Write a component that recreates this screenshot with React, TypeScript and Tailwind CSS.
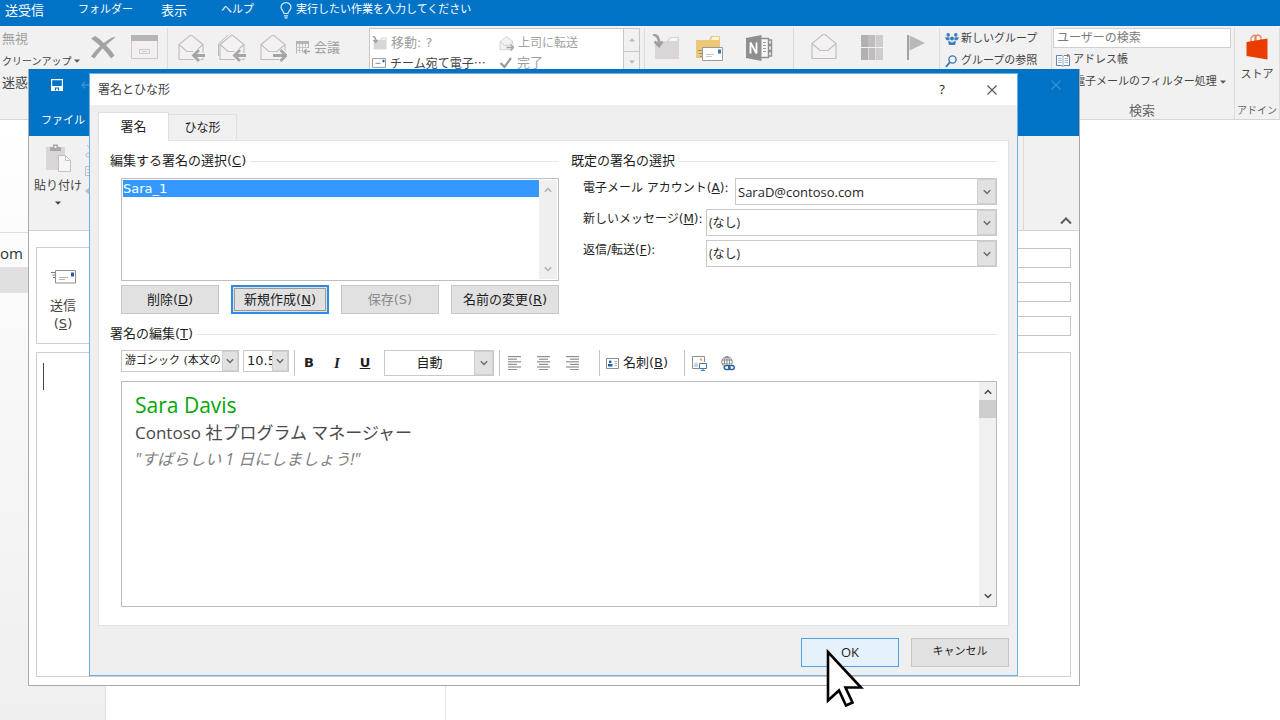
import React, { useState } from 'react'

const UI_FONT = "font-['DejaVu_Sans','Noto_Sans_CJK_JP',sans-serif]"
const TEXT_FONT = "font-['Open_Sans','Noto_Sans_CJK_JP',sans-serif]"

/* ---------- Small parts ---------- */

// Label with an underlined access key: 削除(D)
const KeyLabel: React.FC<{ text: string; k: string; tail?: string }> = ({ text, k, tail }) => (
  <>
    {text}(<span className="underline underline-offset-1">{k}</span>){tail}
  </>
)

const Chevron: React.FC<{ up?: boolean; className?: string }> = ({ up, className = 'text-[#6a6a6a]' }) => (
  <svg width="8" height="6" viewBox="0 0 8 6" className={className} fill="none" stroke="currentColor" strokeWidth="1.4">
    <path d={up ? 'M0.8 4.8 4 1.4 7.2 4.8' : 'M0.8 1.2 4 4.6 7.2 1.2'} />
  </svg>
)

const Caret: React.FC<{ className?: string }> = ({ className = 'text-[#5c5c5c]' }) => (
  <svg width="6" height="4" viewBox="0 0 6 4" className={`shrink-0 ${className}`}>
    <path d="M0 0.5H6L3 3.8z" fill="currentColor" />
  </svg>
)

const GroupTitle: React.FC<{ children: React.ReactNode }> = ({ children }) => (
  <div className="flex h-5 items-center gap-1 text-[13px] leading-5">
    <h2>{children}</h2>
    <span className="h-px flex-1 bg-[#e6e6e6]" />
  </div>
)

interface DropDownProps {
  id?: string
  label?: string
  options: string[]
  className: string
  selectClass?: string
  arrowClass?: string
}

const DropDown: React.FC<DropDownProps> = ({
  id,
  label,
  options,
  className,
  selectClass = 'pl-[2px] text-[13px]',
  arrowClass = 'w-[19px]',
}) => (
  <div className={`flex border border-[#c9c9cd] bg-white ${className}`}>
    <select id={id} aria-label={label} className={`min-w-0 flex-1 appearance-none bg-white outline-none ${selectClass}`}>
      {options.map((o) => (
        <option key={o}>{o}</option>
      ))}
    </select>
    <span
      className={`pointer-events-none flex shrink-0 items-center justify-center border border-[#cfcfcf] bg-[#e1e1e1] ${arrowClass}`}
    >
      <Chevron />
    </span>
  </div>
)

/* ---------- Icons ---------- */

const OpenEnvelope: React.FC<{ arrow?: 'left' | 'right'; double?: boolean; size?: number }> = ({
  arrow,
  double,
  size = 28,
}) => (
  <svg width={size} height={size} viewBox="0 0 28 28" fill="none" className="shrink-0">
    {double && <path d="M0.500 22V10L10 1" stroke="#bdb8bc" />}
    <path d="M2 25.500V10.500L13 1.500H15L26 10.500V25.500z" fill="#f4f0f4" stroke="#c3bdc2" strokeWidth="1.200" />
    <path d="M2 10.500 10 17.500H18L26 10.500" stroke="#c3bdc2" strokeWidth="1.200" />
    {arrow === 'left' && (
      <>
        <path d="M28 21.500H16.500M22 15.500 16 21.500 22 27" stroke="#f1f1f1" strokeWidth="5" />
        <path d="M28 21.500H16.500M22 16 16.500 21.500 22 27" stroke="#a5a5a5" strokeWidth="2.800" />
      </>
    )}
    {arrow === 'right' && (
      <>
        <path d="M14 21.500H27M21.500 15.500 27.500 21.500 21.500 27" stroke="#f1f1f1" strokeWidth="5" />
        <path d="M14 21.500H27M21.500 16 27 21.500 21.500 27" stroke="#a5a5a5" strokeWidth="2.800" />
      </>
    )}
  </svg>
)

const DeleteIcon = () => (
  <svg width="25" height="23" viewBox="0 0 25 23" fill="#a3a3a3">
    <path d="M0 2.500 4 0C9 3 18 11 23.500 19.500L20 22.500C15 15 8 8 0 2.500z" />
    <path d="M21 1.500 25 1C17 7 9 14 3.500 22.500L0 20.500C6 12 13 6 21 1.500z" />
  </svg>
)

const ArchiveIcon = () => (
  <svg width="27" height="24" viewBox="0 0 27 24" fill="none">
    <path d="M0.500 5V23.500H26.500V5" fill="#f3eff3" stroke="#cdc8cc" />
    <path d="M0 0H27V6H0z" fill="#b5b5b5" />
    <path d="M8.500 14.500H18.500V18.500H8.500z" stroke="#cdc8cc" />
    <path d="M11 16.500H16" stroke="#cdc8cc" />
  </svg>
)

const MeetingIcon = () => (
  <svg width="14" height="14" viewBox="0 0 14 14" fill="none">
    <path d="M0.500 12.500V0.500H12.500V7" stroke="#b3b3b3" />
    <path d="M0 0H13V3H0z" fill="#b3b3b3" />
    <path d="M3.500 3V12M6.500 3V12M9.500 3V7M0 6.500H12M0 9.500H7" stroke="#c9c4c8" />
    <path d="M14 10.500H8M10.500 8 8 10.500 10.500 13" stroke="#a5a5a5" strokeWidth="1.400" />
  </svg>
)

const MoveFolderIcon: React.FC<{ size?: number }> = ({ size = 28 }) => (
  <svg width={size} height={size} viewBox="0 0 28 28" fill="none">
    <path d="M3 7H15L18 3H27V25H3z" fill="#d9d5d9" />
    <path d="M16 7 18.500 3.500H26V7" fill="#f7f5f7" stroke="#d5d0d4" />
    <path d="M1 0.500C5 1 7.500 4 7 11M2.500 7.500 7 12 10.500 7.500" stroke="#a0a0a0" strokeWidth="2.600" />
  </svg>
)

const RulesIcon = () => (
  <svg width="28" height="28" viewBox="0 0 28 28" fill="none">
    <path d="M1 6H14L16 2H25V24H1z" fill="#efc673" />
    <path d="M15.500 6 17 2.500H24.500V6" fill="#fff7e6" stroke="#efc673" />
    <path d="M7.500 13.500H27.500V26.500H7.500z" fill="#fff" stroke="#9a9a9a" />
    <path d="M11 20.500H19M11 22.500H17" stroke="#c8c8c8" />
    <path d="M23 15.500H26V19.500H23z" fill="#2f75b8" />
    <path d="M3 16.500H7M4 19.500H7M5 22.500H7" stroke="#8f8f8f" />
  </svg>
)

const OneNoteIcon = () => (
  <svg width="27" height="26" viewBox="0 0 27 26" fill="none">
    <path d="M15 3.500H22.500V22.500H15" fill="#f6f6f6" stroke="#8f8f8f" strokeWidth="1.400" />
    <path d="M22.500 5H25.500V9.500H22.500M22.500 10.500H25.500V15.500H22.500M22.500 16.500H25.500V21H22.500" stroke="#8f8f8f" strokeWidth="1.400" />
    <path d="M17 7.500H20M17 10.500H20M17 13.500H20M17 16.500H20" stroke="#9c9c9c" />
    <path d="M0 3 15.500 0V26L0 23z" fill="#8f8f8f" />
    <path d="M4.500 18.500V7.500L10.500 18.500V7.500" stroke="#fff" strokeWidth="1.800" />
  </svg>
)

const CategoryIcon = () => (
  <svg width="22" height="25" viewBox="0 0 22 25">
    <path d="M0 0H7V12H0zM0 13H7V25H0z" fill="#b1b1b1" />
    <path d="M7 0H14V12H7zM7.500 13H14V25H7.500z" fill="#c0bcc0" />
    <path d="M14.500 0H22V12H14.500zM14.500 13H22V25H14.500z" fill="#cfcbcf" />
  </svg>
)

const FlagIcon = () => (
  <svg width="18" height="25" viewBox="0 0 18 25">
    <path d="M0 0H2V25H0z" fill="#a3a3a3" />
    <path d="M2.500 0.500 18 8 2.500 15.500z" fill="#b8b8b8" />
  </svg>
)

const PeopleIcon = () => (
  <svg width="14" height="13" viewBox="0 0 14 13" fill="#3f7cba">
    <circle cx="3.200" cy="1.900" r="1.800" />
    <circle cx="10.800" cy="1.900" r="1.800" />
    <circle cx="7" cy="5.600" r="2" />
    <path d="M0 4.200H4.500V7.200H1.500zM9.500 4.200H14L12.500 7.200H9.500zM3 8.200H5L7 9.800 9 8.200H11L10 12H4z" />
  </svg>
)

const SearchIcon = () => (
  <svg width="12" height="13" viewBox="0 0 12 13" fill="none" stroke="#3f78b5">
    <circle cx="7.500" cy="4.500" r="3.600" strokeWidth="1.400" />
    <path d="M4.800 7.400 0.900 12" strokeWidth="1.900" />
  </svg>
)

const BookIcon = () => (
  <svg width="14" height="13" viewBox="0 0 14 13" fill="none">
    <path d="M0.500 1.500H6L7 2.500 8 1.500H13.500V11.500H8L7 12.500 6 11.500H0.500z" fill="#fff" stroke="#5b86b5" />
    <path d="M7 2.500V12M2 4.500H5.500M2 6.500H5.500M2 8.500H5.500M8.500 4.500H12M8.500 6.500H12M8.500 8.500H12" stroke="#9db3cc" />
    <path d="M11 0H12.500V3H11z" fill="#e0603a" />
  </svg>
)

const StoreIcon = () => (
  <svg width="22" height="26" viewBox="0 0 22 26" fill="none">
    <path d="M5 9V4Q7 0.500 10 1.500V7M9 8V3Q12 -1 15 3V7" stroke="#e8835f" strokeWidth="1.300" />
    <path d="M0.500 8 21.500 4.500V25.500L0.500 22z" fill="#eb3c00" />
  </svg>
)

const MailIcon: React.FC<{ width?: number }> = ({ width = 14 }) => (
  <svg width={width} height={Math.round(width * 0.7)} viewBox="0 0 20 14" fill="none">
    <path d="M0.700 0.700H19.300V13.300H0.700z" fill="#fff" stroke="#8a8a8a" strokeWidth="1.200" />
    <path d="M5 7.500H12" stroke="#8a8a8a" strokeWidth="1.400" />
    <path d="M15 2.500H17.800V6H15z" fill="#1f5ea8" />
  </svg>
)

const SendIcon = () => (
  <svg width="25" height="15" viewBox="0 0 25 15" fill="none">
    <path d="M4.500 1.500H24.500V14H4.500z" fill="#fff" stroke="#909090" />
    <path d="M8 8.500H17M8 10.500H14" stroke="#b5b5b5" />
    <path d="M20 3.500H23V7.500H20z" fill="#1f5ea8" />
    <path d="M0 3.500H4M1.500 6H4M2 8.500H4" stroke="#7a7a7a" />
  </svg>
)

const PasteIcon = () => (
  <svg width="26" height="28" viewBox="0 0 26 28" fill="none">
    <path d="M1 3H20V26H1z" fill="#d9d5d9" />
    <path d="M5 3H8V0.500H13V3H16V7H5z" fill="#a8a8a8" />
    <path d="M9.500 2H11.500V4H9.500z" fill="#f1f1f1" />
    <path d="M13.500 11.500H20.500L25.500 16.500V27.500H13.500z" fill="#f8f5f8" stroke="#c4bfc3" />
    <path d="M20.500 11.500V16.500H25.500" stroke="#c4bfc3" />
  </svg>
)

const AlignIcon: React.FC<{ kind: 'left' | 'center' | 'right' }> = ({ kind }) => {
  const rows = [13, 9, 13, 9, 13, 9]
  return (
    <svg width="13" height="14" viewBox="0 0 13 14" fill="#8f8f8f">
      {rows.map((w, i) => {
        const x = kind === 'left' ? 0 : kind === 'center' ? (13 - w) / 2 : 13 - w
        return <rect key={i} x={x} y={i * 2.6} width={w} height="1.2" />
      })}
    </svg>
  )
}

const CardIcon = () => (
  <svg width="13" height="11" viewBox="0 0 13 11" fill="none">
    <path d="M0.500 0.500H12.500V10.500H0.500z" fill="#fff" stroke="#8c8c8c" />
    <circle cx="4.200" cy="3.900" r="1.400" fill="#1f5ea8" />
    <path d="M2 8.500V6H6.500V8.500z" fill="#1f5ea8" />
    <path d="M8.500 3.500H11M8.500 5.500H11M8.500 7.500H11" stroke="#a8b4c2" />
  </svg>
)

const PictureIcon = () => (
  <svg width="15" height="15" viewBox="0 0 15 15" fill="none">
    <path d="M7 12.500H0.500V0.500H12.500V6" stroke="#8c8c8c" />
    <path d="M2 11V8L4 6 6 8V11z" fill="#c3d2e2" />
    <circle cx="9" cy="3.500" r="1.200" fill="#eda24a" />
    <path d="M7.500 7.500H14.500V12.500H7.500z" fill="#fff" stroke="#3f78b5" />
    <path d="M9 14.500H13M11 12.500V14.500" stroke="#3f78b5" />
  </svg>
)

const LinkIcon = () => (
  <svg width="14" height="15" viewBox="0 0 14 15" fill="none">
    <circle cx="6" cy="6" r="5.300" stroke="#868686" />
    <ellipse cx="6" cy="6" rx="2.500" ry="5.300" stroke="#868686" />
    <path d="M1 4H11M1 8H11M6 0.500V11" stroke="#868686" />
    <path d="M3 8.500H14V15H3z" fill="#fff" />
    <rect x="3.300" y="9.600" width="5.600" height="4" rx="2" stroke="#2a6099" strokeWidth="1.500" />
    <rect x="7.700" y="9.600" width="5.600" height="4" rx="2" stroke="#2a6099" strokeWidth="1.500" />
  </svg>
)

const BulbIcon = () => (
  <svg width="12" height="17" viewBox="0 0 12 17" fill="none" stroke="#d9ebfa" strokeWidth="1.200">
    <path d="M4 11.500C4 9 1 8 1 5.300A5 4.700 0 0 1 11 5.300C11 8 8 9 8 11.500z" />
    <path d="M4 13.800H8M4.500 15.800H7.500" />
  </svg>
)

const CloseIcon: React.FC<{ className: string }> = ({ className }) => (
  <svg width="10" height="10" viewBox="0 0 10 10" className={className} stroke="currentColor" strokeWidth="1.100">
    <path d="M0.500 0.500 9.500 9.500M9.500 0.500 0.500 9.500" />
  </svg>
)

const MousePointer = () => (
  <svg
    width="40"
    height="60"
    viewBox="0 0 40 60"
    aria-hidden="true"
    className="pointer-events-none absolute left-[22px] top-[8px] z-10"
  >
    <path
      d="M4 5V53.500L15 43.500 22 58.500 28.500 55.500 21.500 40.500H37z"
      fill="#fff"
      stroke="#000"
      strokeWidth="2.600"
    />
  </svg>
)

/* ---------- Outlook main window ---------- */

const MenuBar = () => (
  <nav className="flex h-[26px] items-center bg-[#0173c7] pb-[5px] pl-[5px] text-white">
    <button className="w-[73px] text-left text-[13px]">送受信</button>
    <button className="w-[83px] text-left text-[11px]">フォルダー</button>
    <button className="w-[60px] text-left text-[13px]">表示</button>
    <button className="w-[59px] text-left text-[11px]">ヘルプ</button>
    <button className="flex items-center gap-1 text-[11px]">
      <BulbIcon />
      実行したい作業を入力してください
    </button>
  </nav>
)

const MainRibbon = () => (
  <div className="flex h-[94px] border-b border-[#d5d5d5] bg-[#f1f1f1] pt-[2px] text-[#444]">
    <div className="flex w-[168px] shrink-0 border-r border-[#dcdcdc]">
      <div className="flex w-[91px] shrink-0 flex-col pl-[2px] text-left">
        <button className="h-[22px] text-left text-[13px] text-[#a0a0a0]">無視</button>
        <button className="flex h-[22px] items-center gap-[2px] text-[10px]">
          クリーンアップ
          <Caret />
        </button>
        <button className="h-[22px] text-left text-[13px]">迷惑</button>
      </div>
      <button aria-label="削除" className="flex h-[38px] items-center">
        <DeleteIcon />
      </button>
      <button aria-label="アーカイブ" className="ml-[15px] flex h-[38px] items-center">
        <ArchiveIcon />
      </button>
    </div>
    <div className="flex h-10 w-[201px] shrink-0 items-center gap-[13px] pl-[9px]">
      <button aria-label="返信"><OpenEnvelope arrow="left" /></button>
      <button aria-label="全員に返信"><OpenEnvelope arrow="left" double /></button>
      <button aria-label="転送"><OpenEnvelope arrow="right" /></button>
      <button className="-ml-1 flex items-center gap-1 text-[13px] text-[#a0a0a0]">
        <MeetingIcon />
        会議
      </button>
    </div>
    <div className="flex w-[276px] shrink-0 border-r border-[#dcdcdc]">
      <div className="flex h-[68px] w-[271px] border border-[#c6c6c6] bg-white">
        <div className="grid flex-1 grid-cols-[127px_1fr] content-start pl-[2px] pt-1">
          <button className="flex h-5 items-center gap-1 text-[13px] text-[#a0a0a0]">
            <MoveFolderIcon size={15} />
            移動: ?
          </button>
          <button className="flex h-5 items-center gap-1 text-[12px] text-[#a0a0a0]">
            <OpenEnvelope size={15} arrow="right" />
            上司に転送
          </button>
          <button className="flex h-5 items-center gap-1 whitespace-nowrap text-[12px]">
            <MailIcon />
            <span className="font-['Noto_Sans_CJK_JP',sans-serif]">チーム宛て電子…</span>
          </button>
          <button className="flex h-5 items-center gap-1 text-[13px] text-[#a0a0a0]">
            <svg width="14" height="12" viewBox="0 0 14 12" fill="none" stroke="#9a9a9a" strokeWidth="2.200">
              <path d="M1.500 6 5.500 10 12 1" />
            </svg>
            完了
          </button>
        </div>
        <div className="flex w-4 flex-col border-l border-[#c6c6c6] bg-[#f1f1f1]">
          <span className="flex h-[23px] items-center justify-center border-b border-[#c6c6c6]">
            <Caret className="rotate-180 text-[#b8b8b8]" />
          </span>
          <span className="flex h-5 items-center justify-center">
            <Caret className="text-[#b8b8b8]" />
          </span>
        </div>
      </div>
    </div>
    <div className="flex h-10 w-[148px] shrink-0 items-center pl-[7px]">
      <button aria-label="移動" className="w-[43px]"><MoveFolderIcon /></button>
      <button aria-label="ルール" className="w-[51px]"><RulesIcon /></button>
      <button aria-label="OneNote"><OneNoteIcon /></button>
    </div>
    <div className="w-px shrink-0 bg-[#dcdcdc]" />
    <div className="flex h-[38px] w-[145px] shrink-0 items-center pl-4">
      <button aria-label="未読" className="w-[51px]"><OpenEnvelope /></button>
      <button aria-label="分類" className="w-[46px]"><CategoryIcon /></button>
      <button aria-label="フラグの設定"><FlagIcon /></button>
    </div>
    <div className="w-[113px] shrink-0 border-x border-[#dcdcdc] pl-[5px] text-[11px]">
      <button className="flex h-[22px] items-center gap-[2px]">
        <PeopleIcon />
        新しいグループ
      </button>
      <button className="flex h-[22px] items-center gap-1">
        <SearchIcon />
        グループの参照
      </button>
    </div>
    <div className="flex w-[182px] shrink-0 flex-col pl-[1px] pr-[3px] text-[11px]">
      <input
        aria-label="ユーザーの検索"
        placeholder="ユーザーの検索"
        className="h-5 w-full border border-[#d0d0d0] bg-white px-[3px] text-[12px] placeholder:text-[#7a7a7a]"
      />
      <button className="mt-px flex h-[22px] items-center gap-[3px] pl-[3px]">
        <BookIcon />
        アドレス帳
      </button>
      <button className="flex h-[22px] items-center gap-[3px] whitespace-nowrap pl-[21px]">
        電子メールのフィルター処理
        <Caret />
      </button>
      <span className="mt-auto text-center text-[13px] leading-4 text-[#666]">検索</span>
    </div>
    <div className="flex w-[46px] shrink-0 flex-col items-center border-x border-[#dcdcdc] pt-[6px]">
      <button className="flex flex-col items-center gap-[7px] text-[11px]">
        <StoreIcon />
        ストア
      </button>
      <span className="mt-auto whitespace-nowrap text-[10px] leading-4 text-[#666]">アドイン</span>
    </div>
  </div>
)

const MainBody = () => (
  <div className="flex flex-1">
    <div className="w-[106px] border-r border-[#e0e0e0] bg-gradient-to-b from-white to-[#efefef] pt-28">
      <div className={`h-[35px] border-t border-[#dcdcdc] pt-2 text-[15px] leading-6 text-[#333] ${TEXT_FONT}`}>om</div>
      <div className="h-[26px] bg-[#e0e0e0]" />
    </div>
    <div className="w-[340px] border-r border-[#e3e3e3]" />
  </div>
)

/* ---------- New message window ---------- */

const ComposeWindow = () => (
  <section className="absolute bottom-[34px] left-7 right-[200px] top-[69px] flex flex-col border-x border-b border-[#a9a9a9] bg-white text-[#444]">
    <div className="h-[67px] bg-[#0173c7] text-white">
      <div className="flex h-8 items-center pl-[22px] pr-[18px]">
        <svg width="12" height="12" viewBox="0 0 12 12" fill="none" stroke="#fff" strokeWidth="1.200">
          <path d="M0.600 0.600H11.400V11.400H0.600z" />
          <path d="M1 7.500H11V11H1z" fill="#fff" />
          <path d="M4.500 11.500V9H7.500V11.500" stroke="#0173c7" />
        </svg>
        <svg width="12" height="8" viewBox="0 0 12 8" fill="none" stroke="#3b92d6" strokeWidth="1.300" className="ml-[18px]">
          <path d="M4 0.600 0.800 4 4 7.400M1 4H12" />
        </svg>
        <button aria-label="メッセージを閉じる" className="ml-auto">
          <CloseIcon className="text-[#3b92d6]" />
        </button>
      </div>
      <button className="mt-1 h-8 pl-[12px] text-[11px]">ファイル</button>
    </div>
    <div className="flex h-[95px] border-b border-[#d2d2d2] bg-[#f1f1f1] pl-1">
      <button className="flex w-[50px] flex-col items-center pt-2 text-[12px]">
        <PasteIcon />
        <span className="mt-[5px] leading-[18px]">貼り付け</span>
        <Caret className="mt-[6px]" />
      </button>
      <div className="flex flex-col gap-2 pl-[2px] pt-2 text-[#c0c0c0]">
        <svg width="14" height="14" viewBox="0 0 14 14" fill="none" stroke="currentColor">
          <path d="M2 1 9 9M9 1 4 9" />
          <circle cx="3" cy="11" r="2" />
          <circle cx="10" cy="11" r="2" />
        </svg>
        <svg width="14" height="12" viewBox="0 0 14 12" fill="none" stroke="currentColor">
          <path d="M0.500 0.500H8V9.500H0.500zM2 3.500H6M2 6.500H6" />
        </svg>
        <svg width="14" height="12" viewBox="0 0 14 12" fill="currentColor">
          <path d="M0 5 6 0V10z" />
        </svg>
      </div>
      <div className="ml-auto flex w-14 items-end justify-end border-l border-[#dadada] pb-[5px] pr-[7px]">
        <button aria-label="リボンを折りたたむ">
          <svg width="12" height="8" viewBox="0 0 12 8" fill="none" stroke="#5e5e5e" strokeWidth="2">
            <path d="M1 6.500 6 1.500 11 6.500" />
          </svg>
        </button>
      </div>
    </div>
    <div className="flex flex-1 flex-col pb-2 pl-[7px] pr-2 pt-4">
      <div className="flex h-[97px] gap-16">
        <button className="flex w-[54px] shrink-0 flex-col items-center border border-[#cfcfcf] pt-[21px] text-[13px] leading-[18px]">
          <SendIcon />
          <span className="mt-[13px]">送信</span>
          <span>
            (<span className="underline">S</span>)
          </span>
        </button>
        <div className="flex flex-1 flex-col gap-[14px] pt-[1px]">
          <input aria-label="宛先" className="h-5 border border-[#c4c4c4]" />
          <input aria-label="C C" className="h-5 border border-[#c4c4c4]" />
          <input aria-label="件名" className="h-5 border border-[#c4c4c4]" />
        </div>
      </div>
      <div role="textbox" aria-label="本文" className="mt-2 flex-1 border border-[#cfcfcf] pl-[6px] pt-[10px]">
        <span className="block h-[27px] w-px bg-[#444]" />
      </div>
    </div>
  </section>
)

/* ---------- Signature dialog ---------- */

const PushButton: React.FC<React.ButtonHTMLAttributes<HTMLButtonElement> & { focused?: boolean }> = ({
  className = '',
  focused,
  ...rest
}) => (
  <button
    className={`h-[29px] bg-[#e1e1e1] text-[13px] disabled:text-[#8a8a8a] ${
      focused ? 'border-2 border-[#2f8be0] p-px' : 'border border-[#c6c6c6]'
    } ${className}`}
    {...rest}
  />
)

const SignatureList = () => (
  <div>
    <GroupTitle>
      <KeyLabel text="編集する署名の選択" k="C" />
    </GroupTitle>
    <div className="pl-[11px]">
      <div className="mt-[7px] flex h-[103px] border border-[#bcbec4] bg-white p-px">
        <ul role="listbox" aria-label="署名" className="flex-1">
          <li role="option" aria-selected="true" className="h-[17px] bg-[#3399ff] text-[13px] leading-[18px] text-white">
            Sara_1
          </li>
        </ul>
        <div className="flex w-[18px] flex-col items-center justify-between bg-[#efefef] py-[7px]">
          <Chevron up className="text-[#b0b0b0]" />
          <Chevron className="text-[#b0b0b0]" />
        </div>
      </div>
      <div className="mt-1 flex justify-between">
        <PushButton className="w-[98px]">
          <KeyLabel text="削除" k="D" />
        </PushButton>
        <PushButton className="w-[98px]" focused>
          <span className="flex h-full items-center justify-center border border-[#9a9a9a]">
            <span>
              <KeyLabel text="新規作成" k="N" />
            </span>
          </span>
        </PushButton>
        <PushButton className="w-[98px]" disabled>
          保存(S)
        </PushButton>
        <PushButton className="w-[108px]">
          <KeyLabel text="名前の変更" k="R" />
        </PushButton>
      </div>
    </div>
  </div>
)

const DefaultSignature = () => (
  <div>
    <GroupTitle>既定の署名の選択</GroupTitle>
    <div className="mt-[7px] flex flex-col gap-1 pl-3 text-[12px] leading-5">
      <div className="flex">
        <label htmlFor="account" className="w-[152px] shrink-0 whitespace-nowrap">
          <KeyLabel text="電子メール アカウント" k="A" tail=":" />
        </label>
        <DropDown id="account" className="h-[27px] flex-1" selectClass={`pl-[2px] text-[13px] ${TEXT_FONT}`} options={['SaraD@contoso.com']} />
      </div>
      <div className="flex">
        <label htmlFor="newmsg" className="w-[123px] shrink-0 whitespace-nowrap">
          <KeyLabel text="新しいメッセージ" k="M" tail=":" />
        </label>
        <DropDown id="newmsg" className="h-[27px] flex-1" selectClass={`pl-[2px] text-[12px] ${TEXT_FONT}`} options={['(なし)', 'Sara_1']} />
      </div>
      <div className="flex">
        <label htmlFor="reply" className="w-[123px] shrink-0 whitespace-nowrap">
          <KeyLabel text="返信/転送" k="F" tail=":" />
        </label>
        <DropDown id="reply" className="h-[27px] flex-1" selectClass={`pl-[2px] text-[12px] ${TEXT_FONT}`} options={['(なし)', 'Sara_1']} />
      </div>
    </div>
  </div>
)

const Separator = () => <span className="h-[26px] w-px shrink-0 bg-[#c4c4c4]" />

const FormatBar = () => (
  <div role="toolbar" aria-label="書式" className="mt-[6px] flex h-[26px] items-center">
    <DropDown
      label="フォント"
      className="h-[22px] w-[118px] self-start"
      selectClass="pl-[3px] text-[11px]"
      arrowClass="w-4"
      options={['游ゴシック (本文のフォント)']}
    />
    <DropDown
      label="フォント サイズ"
      className="ml-1 mr-[5px] h-[22px] w-[46px] self-start"
      selectClass="pl-[3px] text-[13px]"
      arrowClass="w-4"
      options={['10.5', '11', '12']}
    />
    <Separator />
    <button aria-label="太字" className="w-7 text-[13px] font-bold">B</button>
    <button aria-label="斜体" className="w-7 font-['Liberation_Serif',serif] text-[15px] font-bold italic">I</button>
    <button aria-label="下線" className="w-7 text-[13px] font-bold underline underline-offset-1">U</button>
    <DropDown
      label="フォントの色"
      className="ml-[5px] mr-[5px] h-[26px] w-[110px]"
      selectClass="text-center text-[13px]"
      options={['自動']}
    />
    <Separator />
    <button aria-label="左揃え" className="flex w-[29px] justify-center"><AlignIcon kind="left" /></button>
    <button aria-label="中央揃え" className="flex w-[29px] justify-center"><AlignIcon kind="center" /></button>
    <button aria-label="右揃え" className="mr-[12px] flex w-[29px] justify-center"><AlignIcon kind="right" /></button>
    <Separator />
    <button className="ml-[6px] mr-4 flex items-center gap-1 text-[13px]">
      <CardIcon />
      <span>
        <KeyLabel text="名刺" k="B" />
      </span>
    </button>
    <Separator />
    <button aria-label="画像" className="ml-[7px] flex w-[29px]"><PictureIcon /></button>
    <button aria-label="ハイパーリンク" className="flex"><LinkIcon /></button>
  </div>
)

const SignatureEditor = () => (
  <div className="mt-[5px] flex h-[226px] border border-[#b9bbc1] bg-white">
    <div
      contentEditable
      suppressContentEditableWarning
      role="textbox"
      aria-label="署名の編集"
      className={`flex-1 pl-[13px] pt-[9px] outline-none ${TEXT_FONT}`}
    >
      <p className="text-[21px] leading-[29px] text-[#00a800]">Sara Davis</p>
      <p className="text-[17px] leading-[26px] text-[#4a4a4a]">Contoso 社プログラム マネージャー</p>
      <p className="text-[16px] italic leading-[26px] text-[#808080]">&quot;すばらしい 1 日にしましょう!&quot;</p>
    </div>
    <div className="flex w-[17px] flex-col items-center bg-[#f0f0f0] py-[7px]">
      <Chevron up className="text-[#444]" />
      <span className="mt-[5px] h-[18px] w-full bg-[#cdcdcd]" />
      <Chevron className="mt-auto text-[#444]" />
    </div>
  </div>
)

const SignatureDialog = () => {
  const [tab, setTab] = useState('signature')

  const tabs = [
    { label: '署名', value: 'signature', size: 'text-[13px]' },
    { label: 'ひな形', value: 'stationery', size: 'text-[12px]' },
  ]

  return (
    <section
      role="dialog"
      aria-label="署名とひな形"
      className="absolute left-[89px] right-[262px] top-[73px] border border-[#6fb0e4] bg-[#efefef] text-[#1e1e1e]"
    >
      {/* Title bar */}
      <header className="flex h-[31px] items-center bg-white pl-2">
        <h1 className="text-[12px] text-[#444]">署名とひな形</h1>
        <button aria-label="ヘルプ" className={`ml-auto flex h-full w-[50px] items-center justify-center text-[13px] ${TEXT_FONT}`}>
          ?
        </button>
        <button aria-label="閉じる" className="flex h-full w-[50px] items-center justify-center">
          <CloseIcon className="text-[#555]" />
        </button>
      </header>

      <div className="px-2 pb-2 pt-[7px]">
        {/* Tabs */}
        <div role="tablist" className="flex items-end">
          {tabs.map((t) => (
            <button
              key={t.value}
              role="tab"
              aria-selected={tab === t.value}
              onClick={() => setTab(t.value)}
              className={`border border-[#dfdfdf] ${t.size} ${
                tab === t.value ? 'relative -mb-px h-[29px] w-[71px] border-b-0 bg-white' : 'h-[26px] w-[68px] border-b-0 border-l-0 bg-[#f0f0f0]'
              }`}
            >
              {t.label}
            </button>
          ))}
        </div>

        {/* Panel */}
        <div className="border border-[#e2e2e2] bg-white pb-[18px] pl-[11px] pr-[11px] pt-[10px]">
          <div className="grid grid-cols-[449fr_426fr] gap-3">
            <SignatureList />
            <DefaultSignature />
          </div>
          <div className="mt-[10px]">
            <GroupTitle>
              <KeyLabel text="署名の編集" k="T" />
            </GroupTitle>
            <div className="pl-[11px]">
              <FormatBar />
              <SignatureEditor />
            </div>
          </div>
        </div>

        {/* Actions */}
        <div className="flex justify-end gap-3 pt-3">
          <button className={`relative h-[29px] w-[98px] border border-[#4fa3e6] bg-[#e5f1fb] text-[13px] ${TEXT_FONT}`}>
            OK
            <MousePointer />
          </button>
          <button className="h-[29px] w-[98px] border border-[#c6c6c6] bg-[#e1e1e1] text-[11px]">キャンセル</button>
        </div>
      </div>
    </section>
  )
}

export default function App() {
  return (
    <main className={`relative flex min-h-screen flex-col overflow-hidden bg-white ${UI_FONT}`}>
      <MenuBar />
      <MainRibbon />
      <MainBody />
      <ComposeWindow />
      <SignatureDialog />
    </main>
  )
}
